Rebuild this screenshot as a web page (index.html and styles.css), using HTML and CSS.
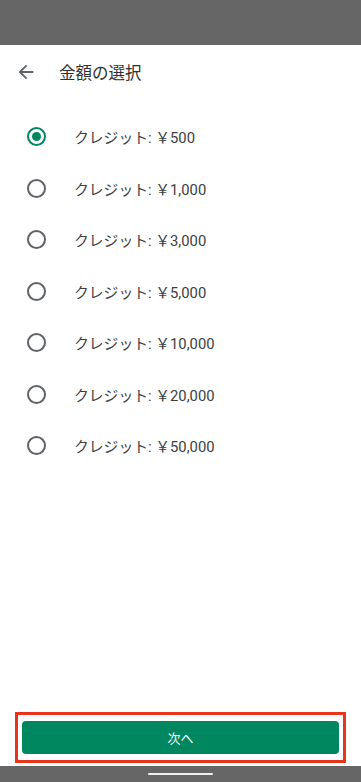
FILE: index.html
```html
<!DOCTYPE html>
<html lang="ja">
<head>
<meta charset="utf-8">
<link rel="stylesheet" href="styles.css">
</head>
<body>
<div class="screen">
  <div class="statusbar"></div>
  <header class="appbar">
    <svg class="back" viewBox="0 0 24 24" width="22" height="22"><path d="M20 11H7.83l5.59-5.59L12 4l-8 8 8 8 1.41-1.41L7.83 13H20v-2z" fill="#5f6368"/></svg>
    <h1 class="title">金額の選択</h1>
  </header>
  <ul class="options">
    <li class="option"><span class="radio checked"></span><span class="label">クレジット: ￥500</span></li>
    <li class="option"><span class="radio"></span><span class="label">クレジット: ￥1,000</span></li>
    <li class="option"><span class="radio"></span><span class="label">クレジット: ￥3,000</span></li>
    <li class="option"><span class="radio"></span><span class="label">クレジット: ￥5,000</span></li>
    <li class="option"><span class="radio"></span><span class="label">クレジット: ￥10,000</span></li>
    <li class="option"><span class="radio"></span><span class="label">クレジット: ￥20,000</span></li>
    <li class="option"><span class="radio"></span><span class="label">クレジット: ￥50,000</span></li>
  </ul>
  <div class="spacer"></div>
  <div class="footer">
    <div class="highlight">
      <button class="next">次へ</button>
    </div>
  </div>
  <div class="navbar"><span class="handle"></span></div>
</div>
</body>
</html>
```

FILE: styles.css
```css
* { box-sizing: border-box; }
html, body { margin: 0; padding: 0; background: #fff; }
body {
  font-family: Roboto, "Noto Sans CJK JP", sans-serif;
  color: #3c4043;
}
.screen {
  width: 361px;
  height: 782px;
  display: flex;
  flex-direction: column;
  overflow: hidden;
}
.statusbar {
  height: 45px;
  background: #666666;
  flex: none;
}
.appbar {
  height: 54px;
  display: flex;
  align-items: center;
  padding-left: 15px;
  flex: none;
}
.back { display: block; flex: none; }
.title {
  margin: 0 0 0 22px;
  font-size: 16.5px;
  font-weight: 400;
  color: #2f3133;
  font-family: "Noto Sans CJK JP", sans-serif;
}
.options {
  list-style: none;
  margin: 0;
  padding: 12px 0 0 0;
}
.option {
  height: 51.5px;
  display: flex;
  align-items: center;
  padding-left: 27px;
}
.radio {
  width: 19px;
  height: 19px;
  border: 2px solid #5f6368;
  border-radius: 50%;
  flex: none;
  display: flex;
  align-items: center;
  justify-content: center;
}
.radio.checked { border-color: #01875f; }
.radio.checked::after {
  content: "";
  width: 9px;
  height: 9px;
  border-radius: 50%;
  background: #01875f;
}
.label {
  margin-left: 28px;
  font-size: 14.8px;
  color: #3c4043;
}
.spacer { flex: 1; }
.footer {
  padding: 0 15px 3px 15px;
  flex: none;
}
.highlight {
  border: 3px solid #e8341c;
  padding: 6px 4px;
}
.next {
  display: block;
  width: 100%;
  height: 33px;
  border: none;
  border-radius: 4px;
  background: #01875f;
  color: #fff;
  font-family: "Noto Sans CJK JP", sans-serif;
  font-size: 13px;
  padding: 0;
}
.navbar {
  height: 16px;
  background: #666666;
  flex: none;
  display: flex;
  justify-content: center;
  align-items: center;
}
.handle {
  width: 65px;
  height: 2px;
  background: #f0f0f0;
  border-radius: 1px;
}
```
